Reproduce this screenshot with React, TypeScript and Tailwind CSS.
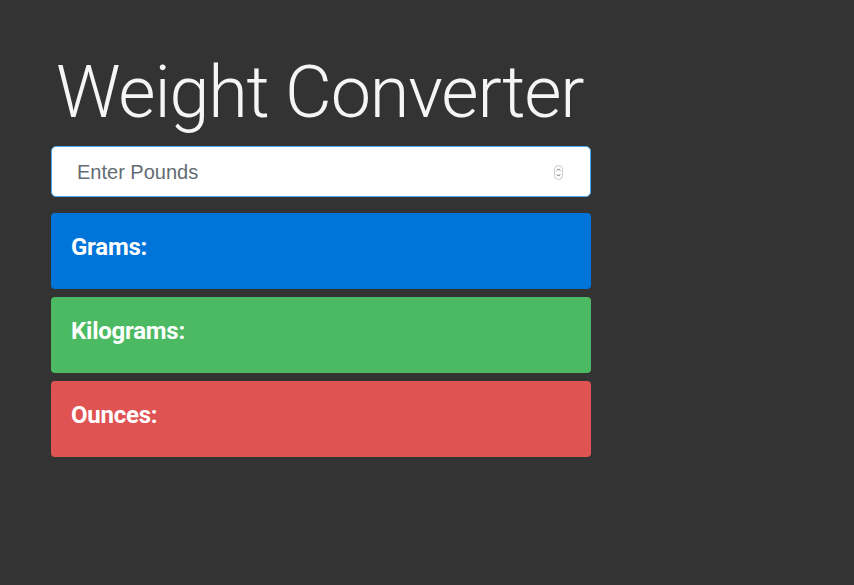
import React from "react";

export default function App() {
  const cards = [
    { label: "Grams:", bg: "bg-[#0074d9]" },
    { label: "Kilograms:", bg: "bg-[#4cba63]" },
    { label: "Ounces:", bg: "bg-[#e05353]" },
  ];
  return (
    <div className="min-h-[585px] w-full bg-[#333333] pl-[51px] pt-[50px]">
      <div className="flex w-[540px] flex-col">
        <h1
          className="ml-[5px] whitespace-nowrap text-[72px] font-light leading-[1.2] tracking-[-0.016em] text-[#f5f5f5]"
          style={{ fontFamily: "Roboto, 'Helvetica Neue', sans-serif" }}
        >
          Weight Converter
        </h1>
        <div className="mt-[10px] flex h-[51px] items-center rounded-[5px] border border-[#4aa8f0] bg-white pl-[25px] pr-[27px]">
          <input
            type="text"
            placeholder="Enter Pounds"
            className="min-w-0 flex-1 bg-transparent text-[20px] text-[#333] outline-none placeholder:text-[#636c72]"
            style={{ fontFamily: "'Liberation Sans', Arial, sans-serif" }}
          />
          <svg width="9" height="15" viewBox="0 0 9 15" className="mt-[2px]">
            <rect x="0.5" y="0.5" width="8" height="14" rx="4" fill="white" stroke="#c8c8c8" />
            <path d="M2.8 5.6 L4.5 3.9 L6.2 5.6" fill="none" stroke="#555" strokeWidth="0.9" />
            <path d="M2.8 9.4 L4.5 11.1 L6.2 9.4" fill="none" stroke="#555" strokeWidth="0.9" />
          </svg>
        </div>
        <div className="mt-[16px] flex flex-col gap-2">
          {cards.map((c) => (
            <div key={c.label} className={`h-[76px] rounded-[4px] ${c.bg} px-5 pt-[20px]`}>
              <h4
                className="text-[24px] font-bold leading-[1.2] tracking-[-0.01em] text-white"
                style={{ fontFamily: "Roboto, 'Helvetica Neue', sans-serif" }}
              >
                {c.label}
              </h4>
            </div>
          ))}
        </div>
      </div>
    </div>
  );
}
